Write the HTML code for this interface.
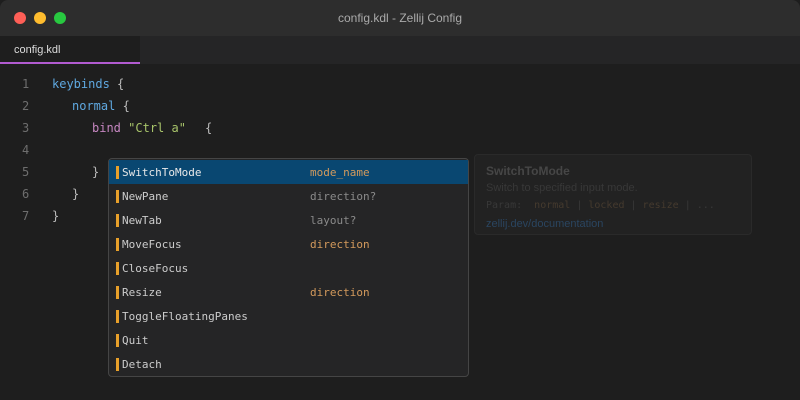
<!DOCTYPE html>
<html><head><meta charset="utf-8"><style>
*{margin:0;padding:0;box-sizing:border-box}
body{width:800px;height:400px;background:#1e1e1e;overflow:hidden;position:relative;font-family:"Liberation Sans",sans-serif}
.title{position:absolute;left:0;top:0;width:800px;height:36px;background:#2d2d2d;border-radius:8px 8px 0 0}
.dot{position:absolute;top:12px;width:12px;height:12px;border-radius:50%}
.title .t{position:absolute;left:0;right:0;top:11px;text-align:center;color:#aaa;font-size:12px}
.tabs{position:absolute;left:0;top:36px;width:800px;height:28px;background:#252526}
.tab{position:absolute;left:0;top:0;width:140px;height:28px;background:#1e1e1e;border-bottom:2px solid #b25bd1;color:#ddd;font-size:11px;padding:8px 0 0 14px}
.code{position:absolute;left:0;top:73px;font-family:"DejaVu Sans Mono",monospace;font-size:12px}
.ln{position:absolute;left:0;width:40px;height:22px;line-height:22px;color:#6e6e6e;text-align:left;padding-left:22px}
.cl{position:absolute;left:52px;height:22px;line-height:22px;color:#ccc;white-space:pre}
.k{color:#5fa8e0}.p{color:#c586c0}.s{color:#a8c46a}.b{color:#bbb}
.pop{position:absolute;left:108px;top:158px;width:361px;height:219px;background:#252526;border:1px solid #454545;border-radius:4px;font-family:"DejaVu Sans Mono",monospace;font-size:11px}
.it{position:absolute;left:0;width:359px;height:24px;line-height:25px;color:#ccc}
.it.sel{background:#094771;color:#e8e8e8}
.bar{position:absolute;left:7px;top:6px;width:3px;height:13px;background:#e8a02a}
.nm{position:absolute;left:13px}
.dt{position:absolute;left:201px;color:#8a8a8a}
.dt.o{color:#d49a5c}
.doc{position:absolute;left:474px;top:154px;width:278px;height:81px;background:#222;border:1px solid #2a2a2a;border-radius:4px;color:#444}
</style></head><body>
<div class="title">
<div class="dot" style="left:14px;background:#fe5f57"></div>
<div class="dot" style="left:34px;background:#febc2e"></div>
<div class="dot" style="left:54px;background:#28c840"></div>
<div class="t">config.kdl - Zellij Config</div>
</div>
<div class="tabs"><div class="tab">config.kdl</div></div>
<div class="code">
<div class="ln" style="top:0">1</div><div class="cl" style="top:0"><span class="k">keybinds</span> <span class="b">{</span></div>
<div class="ln" style="top:22px">2</div><div class="cl" style="top:22px;left:72px"><span class="k">normal</span> <span class="b">{</span></div>
<div class="ln" style="top:44px">3</div><div class="cl" style="top:44px;left:92px"><span class="p">bind</span> <span class="s">"Ctrl a"</span></div><div class="cl" style="top:44px;left:205px"><span class="b">{</span></div>
<div class="ln" style="top:66px">4</div>
<div class="ln" style="top:88px">5</div><div class="cl" style="top:88px;left:92px"><span class="b">}</span></div>
<div class="ln" style="top:110px">6</div><div class="cl" style="top:110px;left:72px"><span class="b">}</span></div>
<div class="ln" style="top:132px">7</div><div class="cl" style="top:132px"><span class="b">}</span></div>
</div>
<div class="pop">
<div class="it sel" style="top:1px"><div class="bar"></div><span class="nm">SwitchToMode</span><span class="dt o">mode_name</span></div>
<div class="it" style="top:25px"><div class="bar"></div><span class="nm">NewPane</span><span class="dt">direction?</span></div>
<div class="it" style="top:49px"><div class="bar"></div><span class="nm">NewTab</span><span class="dt">layout?</span></div>
<div class="it" style="top:73px"><div class="bar"></div><span class="nm">MoveFocus</span><span class="dt o">direction</span></div>
<div class="it" style="top:97px"><div class="bar"></div><span class="nm">CloseFocus</span></div>
<div class="it" style="top:121px"><div class="bar"></div><span class="nm">Resize</span><span class="dt o">direction</span></div>
<div class="it" style="top:145px"><div class="bar"></div><span class="nm">ToggleFloatingPanes</span></div>
<div class="it" style="top:169px"><div class="bar"></div><span class="nm">Quit</span></div>
<div class="it" style="top:193px"><div class="bar"></div><span class="nm">Detach</span></div>
</div>
<div class="doc">
<div style="position:absolute;left:11px;top:9px;font-size:12px;font-weight:bold;color:#464646">SwitchToMode</div>
<div style="position:absolute;left:11px;top:27px;font-size:11px;color:#383838">Switch to specified input mode.</div>
<div style="position:absolute;left:11px;top:45px;font-size:10px;font-family:'DejaVu Sans Mono',monospace;color:#383838;white-space:pre">Param:  <span style="color:#453a2e">normal</span> | <span style="color:#453a2e">locked</span> | <span style="color:#453a2e">resize</span> | ...</div>
<div style="position:absolute;left:11px;top:63px;font-size:11px;color:#2a4560">zellij.dev/documentation</div>
</div>
</body></html>
